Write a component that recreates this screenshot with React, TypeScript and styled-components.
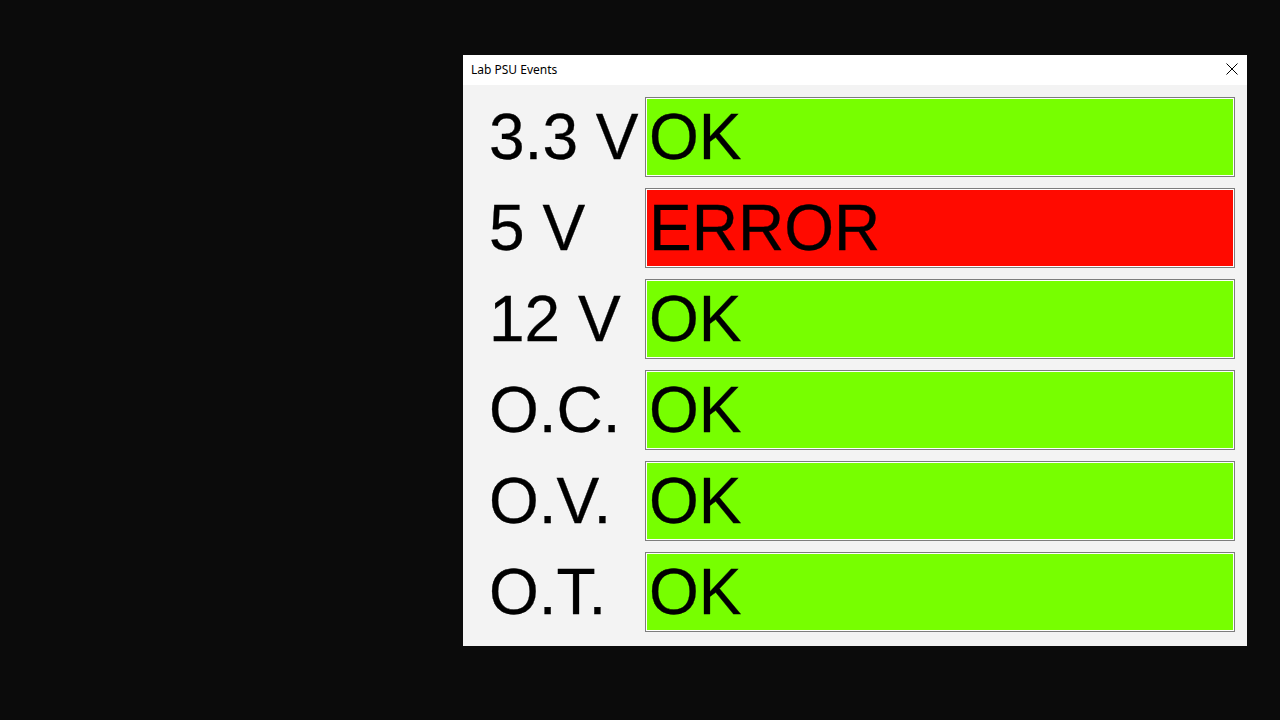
import React from "react";
import styled, { createGlobalStyle } from "styled-components";

const Global = createGlobalStyle`
  html, body { margin: 0; padding: 0; background: #0b0b0b; }
  body { width: 1280px; height: 720px; overflow: hidden; font-family: "Liberation Sans", Arial, sans-serif; }
`;

const Screen = styled.div`
  width: 1280px;
  height: 720px;
  padding: 55px 0 0 463px;
  box-sizing: border-box;
`;

const Window = styled.div`
  width: 784px;
  height: 591px;
  background: #f3f3f3;
  display: flex;
  flex-direction: column;
`;

const TitleBar = styled.div`
  height: 30px;
  background: #ffffff;
  display: flex;
  align-items: center;
  justify-content: space-between;
  padding: 0 8px;
  flex-shrink: 0;
`;

const Title = styled.span`
  font-family: "Segoe UI", "Noto Sans", sans-serif;
  font-size: 12px;
  color: #000;
  margin-top: -2px;
`;

const CloseBtn = styled.div`
  width: 14px;
  height: 14px;
  display: flex;
  align-items: center;
  justify-content: center;
  margin-right: 0;
  margin-top: -2px;
`;

const Body = styled.div`
  display: grid;
  grid-template-columns: 156px 590px;
  grid-auto-rows: 80px;
  row-gap: 11px;
  padding: 12px 12px 0 26px;
`;

const Label = styled.div`
  font-family: "Liberation Sans", Arial, sans-serif;
  font-size: 64px;
  color: #000;
  display: flex;
  align-items: center;
  white-space: nowrap;
  line-height: 1;
  -webkit-text-stroke: 0.3px #000;
`;

const Status = styled.div<{ $ok: boolean }>`
  border: 1px solid #7d7d7d;
  box-shadow: inset 0 0 0 1px #ffffff;
  background: ${(p) => (p.$ok ? "#77ff00" : "#ff0a00")};
  font-family: "Liberation Sans", Arial, sans-serif;
  font-size: 64px;
  color: #000;
  display: flex;
  align-items: center;
  padding-left: 3px;
  line-height: 1;
  box-sizing: border-box;
  -webkit-text-stroke: 0.3px #000;
`;

const rows: { label: string; ok: boolean }[] = [
  { label: "3.3 V", ok: true },
  { label: "5 V", ok: false },
  { label: "12 V", ok: true },
  { label: "O.C.", ok: true },
  { label: "O.V.", ok: true },
  { label: "O.T.", ok: true },
];

export default function App() {
  return (
    <>
      <Global />
      <Screen>
        <Window>
          <TitleBar>
            <Title>Lab PSU Events</Title>
            <CloseBtn>
              <svg width="12" height="12" viewBox="0 0 12 12">
                <path d="M0.5 0.5 L11.5 11.5 M11.5 0.5 L0.5 11.5" stroke="#000" strokeWidth="1" />
              </svg>
            </CloseBtn>
          </TitleBar>
          <Body>
            {rows.map((r) => (
              <React.Fragment key={r.label}>
                <Label>{r.label}</Label>
                <Status $ok={r.ok}>{r.ok ? "OK" : "ERROR"}</Status>
              </React.Fragment>
            ))}
          </Body>
        </Window>
      </Screen>
    </>
  );
}
